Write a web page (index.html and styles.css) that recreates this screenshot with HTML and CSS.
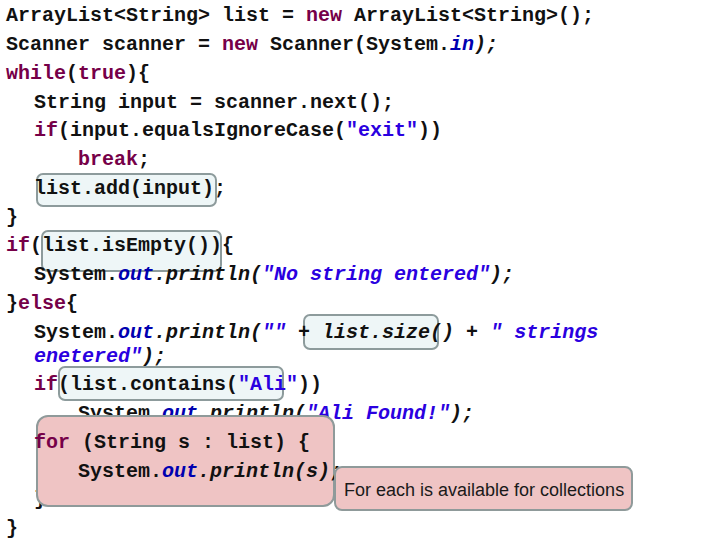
FILE: index.html
```html
<!DOCTYPE html>
<html>
<head>
<meta charset="utf-8">
<link rel="stylesheet" href="styles.css">
</head>
<body>
<div class="slide">
  <div class="code">
    <div class="ln">ArrayList&lt;String&gt; list = <span class="kw">new</span> ArrayList&lt;String&gt;();</div>
    <div class="ln">Scanner scanner = <span class="kw">new</span> Scanner(System.<span class="fld">in</span><span class="it">);</span></div>
    <div class="ln"><span class="kw">while</span>(<span class="kw">true</span>){</div>
    <div class="ln l1">String input = scanner.next();</div>
    <div class="ln l1"><span class="kw">if</span>(input.equalsIgnoreCase(<span class="str">"exit"</span>))</div>
    <div class="ln l2"><span class="kw">break</span>;</div>
    <div class="ln l1">list.add(input);</div>
    <div class="ln">}</div>
    <div class="ln"><span class="kw">if</span>(list.isEmpty()){</div>
    <div class="ln l1">System.<span class="fld">out</span><span class="it">.println(<span class="str">"No string entered"</span>);</span></div>
    <div class="ln">}<span class="kw">else</span>{</div>
    <div class="ln l1">System.<span class="fld">out</span><span class="it">.println(<span class="str">""</span> + list.size() + <span class="str">" strings</span><br><span class="str">enetered"</span>);</span></div>
    <div class="ln l1"><span class="kw">if</span>(list.contains(<span class="str">"Ali"</span>))</div>
    <div class="ln l2 under">System.<span class="fld">out</span><span class="it">.println(<span class="str">"Ali Found!"</span>);</span></div>
    <div class="ln l1"><span class="kw">for</span> (String s : list) {</div>
    <div class="ln l2">System.<span class="fld">out</span><span class="it">.println(s);</span></div>
    <div class="ln l1 under">}</div>
    <div class="ln">}</div>
  </div>

  <div class="hl hl-add"></div>
  <div class="hl hl-empty"></div>
  <div class="hl hl-size"></div>
  <div class="hl hl-contains"></div>
  <div class="pink"></div>
  <div class="tip">For each is available for collections</div>
</div>
</body>
</html>
```
FILE: styles.css
```css
html, body {
  margin: 0;
  padding: 0;
  height: 540px;
  overflow: hidden;
  background: #ffffff;
}

.slide {
  position: relative;
  width: 720px;
  height: 540px;
}

.code {
  padding-left: 6px;
  padding-top: 2px;
  font-family: "Liberation Mono", "DejaVu Sans Mono", monospace;
  font-weight: bold;
  font-size: 20px;
  color: #111111;
}

.ln {
  position: relative;
  z-index: 2;
  line-height: 24px;
  padding: 2.38px 0;
  white-space: pre;
}

.ln.under {
  z-index: 0;
}

.l1 { padding-left: 28px; }
.l2 { padding-left: 72px; }

.kw { color: #760048; }
.str { color: #2a00e0; }
.fld { color: #0000b0; font-style: italic; }
.it { font-style: italic; }

.hl {
  position: absolute;
  z-index: 1;
  box-sizing: border-box;
  background: #eef6f7;
  border: 2px solid #8d9b9c;
  border-radius: 7px;
}

.hl-add { left: 36px; top: 173px; width: 181px; height: 34px; }
.hl-empty { left: 41px; top: 230px; width: 181px; height: 42px; }
.hl-size { left: 303px; top: 314px; width: 136px; height: 36px; }
.hl-contains { left: 58px; top: 366px; width: 226px; height: 35px; }

.pink {
  position: absolute;
  z-index: 1;
  box-sizing: border-box;
  left: 36px;
  top: 415px;
  width: 299px;
  height: 92px;
  background: #efc4c4;
  border: 2px solid #8f9a9a;
  border-radius: 12px;
}

.tip {
  position: absolute;
  z-index: 3;
  box-sizing: border-box;
  left: 334px;
  top: 466px;
  width: 299px;
  height: 45px;
  padding-top: 12px;
  padding-left: 8px;
  background: #efc4c4;
  border: 2px solid #8f9a9a;
  border-radius: 8px;
  font-family: "Liberation Sans", Arial, sans-serif;
  font-size: 18px;
  line-height: 20px;
  color: #1a1a1a;
}
```
